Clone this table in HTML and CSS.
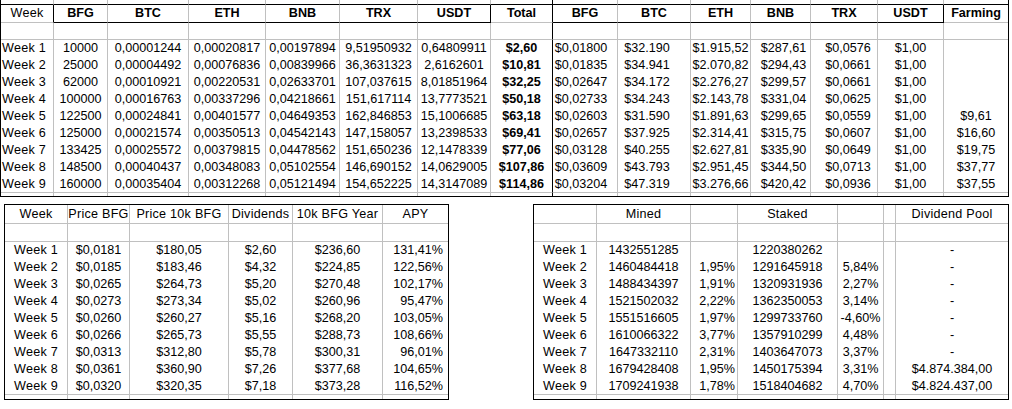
FILE: index.html
```html
<!DOCTYPE html>
<html lang="en">
<head>
<meta charset="utf-8">
<title>BFG weekly sheet</title>
<link rel="stylesheet" href="styles.css">
</head>
<body>
<div class="sheet top">
  <div class="row stub"><span></span><span></span><span></span><span></span><span></span><span></span><span></span><span></span><span></span><span></span><span></span><span></span><span></span><span></span><span></span></div>
  <div class="row hdr"><span>Week</span><span>BFG</span><span>BTC</span><span>ETH</span><span>BNB</span><span>TRX</span><span>USDT</span><span>Total</span><span>BFG</span><span>BTC</span><span>ETH</span><span>BNB</span><span>TRX</span><span>USDT</span><span>Farming</span></div>
  <div class="row blank"><span></span><span></span><span></span><span></span><span></span><span></span><span></span><span></span><span></span><span></span><span></span><span></span><span></span><span></span><span></span></div>
  <div class="row data"><span>Week 1</span><span>10000</span><span>0,00001244</span><span>0,00020817</span><span>0,00197894</span><span>9,51950932</span><span>0,64809911</span><span>$2,60</span><span>$0,01800</span><span>$32.190</span><span>$1.915,52</span><span>$287,61</span><span>$0,0576</span><span>$1,00</span><span></span></div>
  <div class="row data"><span>Week 2</span><span>25000</span><span>0,00004492</span><span>0,00076836</span><span>0,00839966</span><span>36,3631323</span><span>2,6162601</span><span>$10,81</span><span>$0,01835</span><span>$34.941</span><span>$2.070,82</span><span>$294,43</span><span>$0,0661</span><span>$1,00</span><span></span></div>
  <div class="row data"><span>Week 3</span><span>62000</span><span>0,00010921</span><span>0,00220531</span><span>0,02633701</span><span>107,037615</span><span>8,01851964</span><span>$32,25</span><span>$0,02647</span><span>$34.172</span><span>$2.276,27</span><span>$299,57</span><span>$0,0661</span><span>$1,00</span><span></span></div>
  <div class="row data"><span>Week 4</span><span>100000</span><span>0,00016763</span><span>0,00337296</span><span>0,04218661</span><span>151,617114</span><span>13,7773521</span><span>$50,18</span><span>$0,02733</span><span>$34.243</span><span>$2.143,78</span><span>$331,04</span><span>$0,0625</span><span>$1,00</span><span></span></div>
  <div class="row data"><span>Week 5</span><span>122500</span><span>0,00024841</span><span>0,00401577</span><span>0,04649353</span><span>162,846853</span><span>15,1006685</span><span>$63,18</span><span>$0,02603</span><span>$31.590</span><span>$1.891,63</span><span>$299,65</span><span>$0,0559</span><span>$1,00</span><span>$9,61</span></div>
  <div class="row data"><span>Week 6</span><span>125000</span><span>0,00021574</span><span>0,00350513</span><span>0,04542143</span><span>147,158057</span><span>13,2398533</span><span>$69,41</span><span>$0,02657</span><span>$37.925</span><span>$2.314,41</span><span>$315,75</span><span>$0,0607</span><span>$1,00</span><span>$16,60</span></div>
  <div class="row data"><span>Week 7</span><span>133425</span><span>0,00025572</span><span>0,00379815</span><span>0,04478562</span><span>151,650236</span><span>12,1478339</span><span>$77,06</span><span>$0,03128</span><span>$40.255</span><span>$2.627,81</span><span>$335,90</span><span>$0,0649</span><span>$1,00</span><span>$19,75</span></div>
  <div class="row data"><span>Week 8</span><span>148500</span><span>0,00040437</span><span>0,00348083</span><span>0,05102554</span><span>146,690152</span><span>14,0629005</span><span>$107,86</span><span>$0,03609</span><span>$43.793</span><span>$2.951,45</span><span>$344,50</span><span>$0,0713</span><span>$1,00</span><span>$37,77</span></div>
  <div class="row data last"><span>Week 9</span><span>160000</span><span>0,00035404</span><span>0,00312268</span><span>0,05121494</span><span>154,652225</span><span>14,3147089</span><span>$114,86</span><span>$0,03204</span><span>$47.319</span><span>$3.276,66</span><span>$420,42</span><span>$0,0936</span><span>$1,00</span><span>$37,55</span></div>
  <div class="row tail"><span></span><span></span><span></span><span></span><span></span><span></span><span></span><span></span><span></span><span></span><span></span><span></span><span></span><span></span><span></span></div>
</div>

<div class="bottom">
  <div class="sheet dividends">
    <div class="row hdr"><span>Week</span><span>Price BFG</span><span>Price 10k BFG</span><span>Dividends</span><span>10k BFG Year</span><span>APY</span></div>
    <div class="row blank"><span></span><span></span><span></span><span></span><span></span><span></span></div>
    <div class="row data"><span>Week 1</span><span>$0,0181</span><span>$180,05</span><span>$2,60</span><span>$236,60</span><span>131,41%</span></div>
    <div class="row data"><span>Week 2</span><span>$0,0185</span><span>$183,46</span><span>$4,32</span><span>$224,85</span><span>122,56%</span></div>
    <div class="row data"><span>Week 3</span><span>$0,0265</span><span>$264,73</span><span>$5,20</span><span>$270,48</span><span>102,17%</span></div>
    <div class="row data"><span>Week 4</span><span>$0,0273</span><span>$273,34</span><span>$5,02</span><span>$260,96</span><span>95,47%</span></div>
    <div class="row data"><span>Week 5</span><span>$0,0260</span><span>$260,27</span><span>$5,16</span><span>$268,20</span><span>103,05%</span></div>
    <div class="row data"><span>Week 6</span><span>$0,0266</span><span>$265,73</span><span>$5,55</span><span>$288,73</span><span>108,66%</span></div>
    <div class="row data"><span>Week 7</span><span>$0,0313</span><span>$312,80</span><span>$5,78</span><span>$300,31</span><span>96,01%</span></div>
    <div class="row data"><span>Week 8</span><span>$0,0361</span><span>$360,90</span><span>$7,26</span><span>$377,68</span><span>104,65%</span></div>
    <div class="row data last"><span>Week 9</span><span>$0,0320</span><span>$320,35</span><span>$7,18</span><span>$373,28</span><span>116,52%</span></div>
    <div class="row tail"><span></span><span></span><span></span><span></span><span></span><span></span></div>
  </div>

  <div class="sheet supply">
    <div class="row hdr"><span></span><span>Mined</span><span></span><span>Staked</span><span></span><span></span><span>Dividend Pool</span></div>
    <div class="row blank"><span></span><span></span><span></span><span></span><span></span><span></span><span></span></div>
    <div class="row data"><span>Week 1</span><span>1432551285</span><span></span><span>1220380262</span><span></span><span></span><span>-</span></div>
    <div class="row data"><span>Week 2</span><span>1460484418</span><span>1,95%</span><span>1291645918</span><span>5,84%</span><span></span><span>-</span></div>
    <div class="row data"><span>Week 3</span><span>1488434397</span><span>1,91%</span><span>1320931936</span><span>2,27%</span><span></span><span>-</span></div>
    <div class="row data"><span>Week 4</span><span>1521502032</span><span>2,22%</span><span>1362350053</span><span>3,14%</span><span></span><span>-</span></div>
    <div class="row data"><span>Week 5</span><span>1551516605</span><span>1,97%</span><span>1299733760</span><span>-4,60%</span><span></span><span>-</span></div>
    <div class="row data"><span>Week 6</span><span>1610066322</span><span>3,77%</span><span>1357910299</span><span>4,48%</span><span></span><span>-</span></div>
    <div class="row data"><span>Week 7</span><span>1647332110</span><span>2,31%</span><span>1403647073</span><span>3,37%</span><span></span><span>-</span></div>
    <div class="row data"><span>Week 8</span><span>1679428408</span><span>1,95%</span><span>1450175394</span><span>3,31%</span><span></span><span>$4.874.384,00</span></div>
    <div class="row data last"><span>Week 9</span><span>1709241938</span><span>1,78%</span><span>1518404682</span><span>4,70%</span><span></span><span>$4.824.437,00</span></div>
    <div class="row tail"><span></span><span></span><span></span><span></span><span></span><span></span><span></span></div>
  </div>
</div>
</body>
</html>
```
FILE: styles.css
```css
* {
  box-sizing: border-box;
  margin: 0;
  padding: 0;
}

body {
  margin: 0;
  width: 1012px;
  height: 409px;
  overflow: hidden;
  background: #ffffff;
  color: #000000;
  font-family: "Liberation Sans", Arial, sans-serif;
  font-size: 12.6px;
}

.sheet {
  display: grid;
  border: 1px solid #000000;
}

.row {
  display: contents;
}

.row > span {
  display: flex;
  align-items: center;
  justify-content: center;
  white-space: nowrap;
  overflow: hidden;
  line-height: 1;
  border-right: 1px solid #c0c0c0;
}

.row > span:last-child {
  border-right: none;
}

.hdr > span,
.data > span:first-child {
  letter-spacing: 0.25px;
}

.blank > span,
.last > span {
  border-bottom: 1px solid #c0c0c0;
}

/* ---------- top sheet ---------- */
.top {
  width: 1009px;
  border-top: none;
  grid-template-columns: 53px 54px 81px 77px 74px 78px 73px 62px 65px 73px 60px 60px 67px 66px 64px;
  grid-template-rows: 5px 18px 17px repeat(9, 17px) 3px;
}

.top .stub > span {
  border-bottom: 1px solid #000000;
}

.top .hdr > span {
  font-weight: bold;
  letter-spacing: 0;
  border-bottom: 1px solid #c0c0c0;
}

.top .hdr > span:first-child {
  font-weight: normal;
  letter-spacing: 0.25px;
  border-right-color: #000000;
}

.top .hdr > span:nth-child(n+2):nth-child(-n+7),
.top .hdr > span:nth-child(n+9):nth-child(-n+14) {
  border-bottom-color: #000000;
}

.top .hdr > span:nth-child(7),
.top .hdr > span:nth-child(14) {
  border-right-color: #000000;
}

.top .row > span:nth-child(8) {
  border-right-color: #000000;
  font-weight: bold;
}

.top .data > span:first-child {
  justify-content: flex-start;
  padding-left: 1px;
}

.top .data > span:nth-child(9) {
  padding-right: 8px;
}

.top .data > span:nth-child(10) {
  padding-right: 14px;
}

.top .data > span:nth-child(12) {
  padding-left: 6px;
}

.top .data > span:nth-child(13) {
  padding-left: 8px;
}

/* ---------- bottom sheets ---------- */
.bottom {
  width: 1009px;
  margin-top: 7px;
  padding-left: 4px;
  display: flex;
  justify-content: space-between;
  align-items: flex-start;
}

.dividends,
.supply {
  grid-template-rows: 19px 18px repeat(9, 17px) 4px;
}

.dividends {
  width: 445px;
  grid-template-columns: 63px 62px 99px 64px 90px 65px;
}

.dividends .data > span:nth-child(6) {
  justify-content: flex-end;
  padding-right: 5px;
}

.dividends .hdr > span,
.supply .hdr > span {
  border-bottom: 1px solid #c0c0c0;
}

.supply {
  width: 476px;
  grid-template-columns: 63px 94px 47px 100px 46px 12px 112px;
}

.supply .data > span:nth-child(3) {
  padding-left: 6px;
}
```
